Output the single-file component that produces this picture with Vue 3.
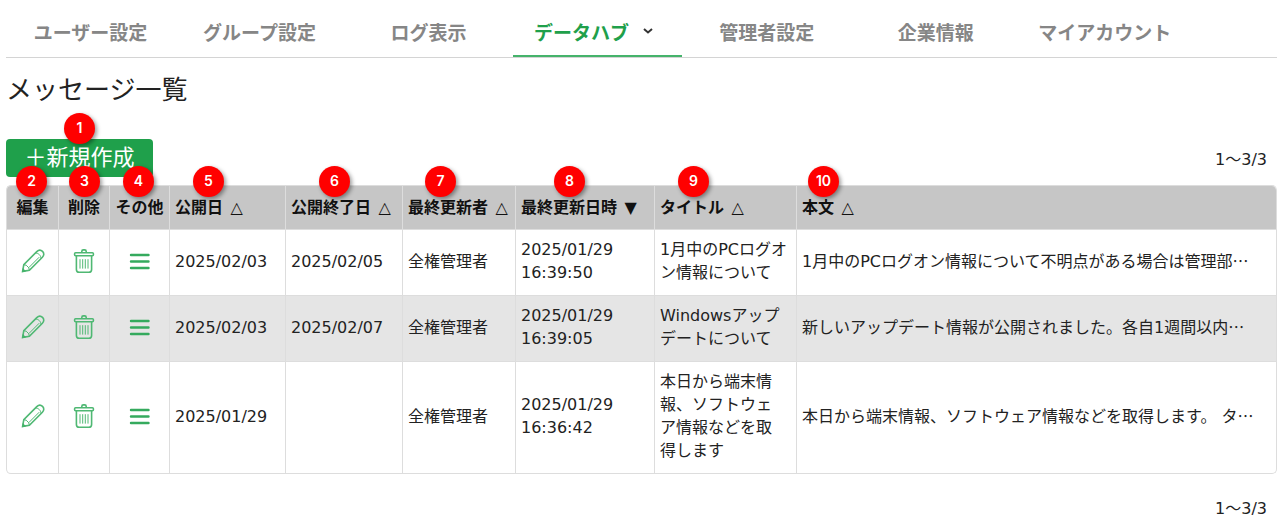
<script setup>
const tabs = [
  { label: 'ユーザー設定' },
  { label: 'グループ設定' },
  { label: 'ログ表示' },
  { label: 'データハブ', active: true },
  { label: '管理者設定' },
  { label: '企業情報' },
  { label: 'マイアカウント' },
]

const columns = [
  { key: 'edit', label: '編集', badge: 2, x: 24 },
  { key: 'delete', label: '削除', badge: 3, x: 25 },
  { key: 'other', label: 'その他', badge: 4, x: 28 },
  { key: 'start', label: '公開日', sort: '△', badge: 5, x: 38 },
  { key: 'end', label: '公開終了日', sort: '△', badge: 6, x: 48 },
  { key: 'user', label: '最終更新者', sort: '△', badge: 7, x: 37 },
  { key: 'updated', label: '最終更新日時', sort: '▼', badge: 8, x: 53 },
  { key: 'title', label: 'タイトル', sort: '△', badge: 9, x: 38 },
  { key: 'body', label: '本文', sort: '△', badge: 10, x: 26 },
]

const rows = [
  {
    start: '2025/02/03',
    end: '2025/02/05',
    user: '全権管理者',
    updated: '2025/01/29\n16:39:50',
    title: '1月中のPCログオ\nン情報について',
    body: '1月中のPCログオン情報について不明点がある場合は管理部',
  },
  {
    start: '2025/02/03',
    end: '2025/02/07',
    user: '全権管理者',
    updated: '2025/01/29\n16:39:05',
    title: 'Windowsアップ\nデートについて',
    body: '新しいアップデート情報が公開されました。各自1週間以内',
  },
  {
    start: '2025/01/29',
    end: '',
    user: '全権管理者',
    updated: '2025/01/29\n16:36:42',
    title: '本日から端末情\n報、ソフトウェ\nア情報などを取\n得します',
    body: '本日から端末情報、ソフトウェア情報などを取得します。 タ',
  },
]
</script>

<template>
  <div class="page" lang="ja">
    <nav class="tabs">
      <a v-for="t in tabs" :key="t.label" href="#" class="tab" :class="{ active: t.active }">
        <span>{{ t.label }}</span>
        <svg v-if="t.active" class="chevron" viewBox="0 0 10 6" aria-hidden="true">
          <path d="M1 1 L5 4.4 L9 1" />
        </svg>
      </a>
    </nav>

    <h1>メッセージ一覧</h1>

    <div class="toolbar">
      <div class="create-wrap">
        <button type="button" class="create">＋新規作成</button>
        <span class="badge first">1</span>
      </div>
      <span class="count">1～3/3</span>
    </div>

    <table>
      <colgroup>
        <col v-for="c in columns" :key="c.key" :class="'col-' + c.key" />
      </colgroup>
      <thead>
        <tr>
          <th v-for="c in columns" :key="c.key" scope="col" :class="{ center: !c.sort }">
            <button v-if="c.sort" type="button" class="sort">
              {{ c.label }} <span class="mark">{{ c.sort }}</span>
            </button>
            <template v-else>{{ c.label }}</template>
            <span class="badge" :style="{ left: c.x + 'px' }">{{ c.badge }}</span>
          </th>
        </tr>
      </thead>
      <tbody>
        <tr v-for="(r, i) in rows" :key="i">
          <td class="center">
            <button type="button" class="icon" aria-label="編集">
              <svg viewBox="0 0 24 24">
                <path d="M1.6 22.4 L2.8 15.6 L15.8 2.6 C17.6 .8 19.9 .8 21.5 2.4 C23.2 4.1 23.2 6.4 21.4 8.2 L8.4 21.2 Z" />
                <path class="thin" d="M3 15.8 L5.2 16.2 L7.8 18.8 L8.2 21 M7.8 18.6 L18.2 8.2 M14.6 4.2 C17.2 3.8 20.2 6.6 19.8 9.4" />
                <path class="fill" d="M1 23.2 L1.8 19 L5 22.3 Z" />
              </svg>
            </button>
          </td>
          <td class="center">
            <button type="button" class="icon" aria-label="削除">
              <svg viewBox="0 0 24 24">
                <path d="M9.8 3.6 V2.4 Q9.8 .9 11.3 .9 H12.7 Q14.2 .9 14.2 2.4 V3.6" />
                <rect x="2.6" y="3.7" width="18.8" height="3" rx="1" />
                <path d="M4.4 7 V20.4 Q4.4 23.2 7.2 23.2 H16.8 Q19.6 23.2 19.6 20.4 V7" />
                <path class="thin" d="M8 10.2 V19.6 M10.7 10.2 V19.6 M13.3 10.2 V19.6 M16 10.2 V19.6" />
              </svg>
            </button>
          </td>
          <td class="center">
            <button type="button" class="icon" aria-label="その他">
              <svg viewBox="0 0 24 24" class="menu">
                <path d="M3 6 H20.5 M3 12.5 H20.5 M3 19 H20.5" />
              </svg>
            </button>
          </td>
          <td>{{ r.start }}</td>
          <td>{{ r.end }}</td>
          <td>{{ r.user }}</td>
          <td class="lines">{{ r.updated }}</td>
          <td class="lines">{{ r.title }}</td>
          <td>{{ r.body }}<span class="dots">…</span></td>
        </tr>
      </tbody>
    </table>

    <div class="footer"><span class="count">1～3/3</span></div>
  </div>
</template>

<style>
body {
  background: #fff;
}
</style>

<style scoped>
.page {
  padding: 0 9px 0 6px;
  font-family: "DejaVu Sans", "Noto Sans CJK JP", sans-serif;
  font-size: 16px;
  line-height: 23px;
  color: #222;
}
button {
  font: inherit;
  color: inherit;
  border: 0;
  padding: 0;
  background: none;
  cursor: pointer;
}
.tabs {
  display: flex;
  border-bottom: 1px solid #d4d4d4;
}
.tab {
  box-sizing: border-box;
  width: 13.3%;
  height: 57px;
  padding-top: 7px;
  border-bottom: 2px solid transparent;
  display: flex;
  align-items: center;
  justify-content: center;
  gap: 14px;
  font-family: "Noto Sans CJK JP", sans-serif;
  font-size: 19px;
  font-weight: 700;
  color: #868686;
  text-decoration: none;
  white-space: nowrap;
}
.tab.active {
  padding-right: 8px;
  color: #1fa04b;
  border-bottom-color: #45b36b;
}
.chevron {
  width: 10px;
  height: 6px;
  fill: none;
  stroke: #333;
  stroke-width: 2;
}
h1 {
  margin: 11px 0 0;
  font-family: "Noto Sans CJK JP", sans-serif;
  font-size: 26px;
  line-height: 38px;
  font-weight: 400;
}
.toolbar {
  display: flex;
  justify-content: space-between;
  margin-top: 32px;
  padding-right: 10px;
}
.create-wrap {
  position: relative;
}
.create {
  display: block;
  width: 147px;
  height: 38px;
  border-radius: 4px;
  background: #1fa04b;
  color: #fff;
  font-family: "Noto Sans CJK JP", sans-serif;
  font-size: 22px;
  line-height: 32px;
  padding-bottom: 6px;
}
.count {
  line-height: 42px;
}
table {
  width: 100%;
  margin-top: 4px;
  table-layout: fixed;
  border-collapse: separate;
  border-spacing: 0;
  border: 1px solid #ddd;
  border-right: 0;
  border-bottom: 0;
  border-radius: 5px;
}
.col-edit { width: 52px; }
.col-delete { width: 51px; }
.col-other { width: 60px; }
.col-start { width: 116px; }
.col-end { width: 117px; }
.col-user { width: 113px; }
.col-updated { width: 139px; }
.col-title { width: 142px; }
th,
td {
  padding: 10px 5px;
  border-right: 1px solid #ddd;
  border-bottom: 1px solid #ddd;
  text-align: left;
  vertical-align: middle;
  white-space: nowrap;
}
td {
  height: 46px;
  padding-top: 8px;
  padding-bottom: 11px;
}
th {
  position: relative;
  height: 23px;
  background: #c6c6c6;
  font-weight: 700;
  color: #111;
}
th:first-child { border-top-left-radius: 4px; }
th:last-child { border-top-right-radius: 5px; }
tr:last-child td:first-child { border-bottom-left-radius: 4px; }
tr:last-child td:last-child { border-bottom-right-radius: 5px; }
tbody tr:nth-child(2) {
  background: #e5e5e5;
}
th.center,
td.center {
  padding-left: 0;
  padding-right: 0;
  text-align: center;
}
.mark {
  margin-left: 2px;
  font-weight: 400;
}
.lines {
  white-space: pre-line;
}
.dots {
  font-family: "Noto Sans CJK JP", sans-serif;
}
.icon {
  display: block;
  margin: 0 auto;
}
.icon svg {
  display: block;
  width: 24px;
  height: 24px;
  fill: none;
  stroke: #4fb873;
  stroke-width: 1.6;
}
.icon .thin {
  stroke-width: 1;
}
.icon .fill {
  fill: #45b36b;
  stroke: none;
}
.icon .menu {
  stroke: #35aa5e;
  stroke-width: 2.4;
  stroke-linecap: round;
}
.badge {
  position: absolute;
  z-index: 1;
  top: -20px;
  width: 31px;
  height: 31px;
  margin-left: -15px;
  border-radius: 50%;
  background: #f00;
  box-shadow: 2px 2px 4px rgba(0, 0, 0, 0.4);
  color: #fff;
  font-family: Inter, "Liberation Sans", sans-serif;
  font-size: 14px;
  font-weight: 600;
  line-height: 29px;
  text-align: center;
}
.badge.first {
  top: -26px;
  left: 73px;
}
.footer {
  display: flex;
  justify-content: flex-end;
  margin-top: 14px;
  padding-right: 10px;
}
</style>
